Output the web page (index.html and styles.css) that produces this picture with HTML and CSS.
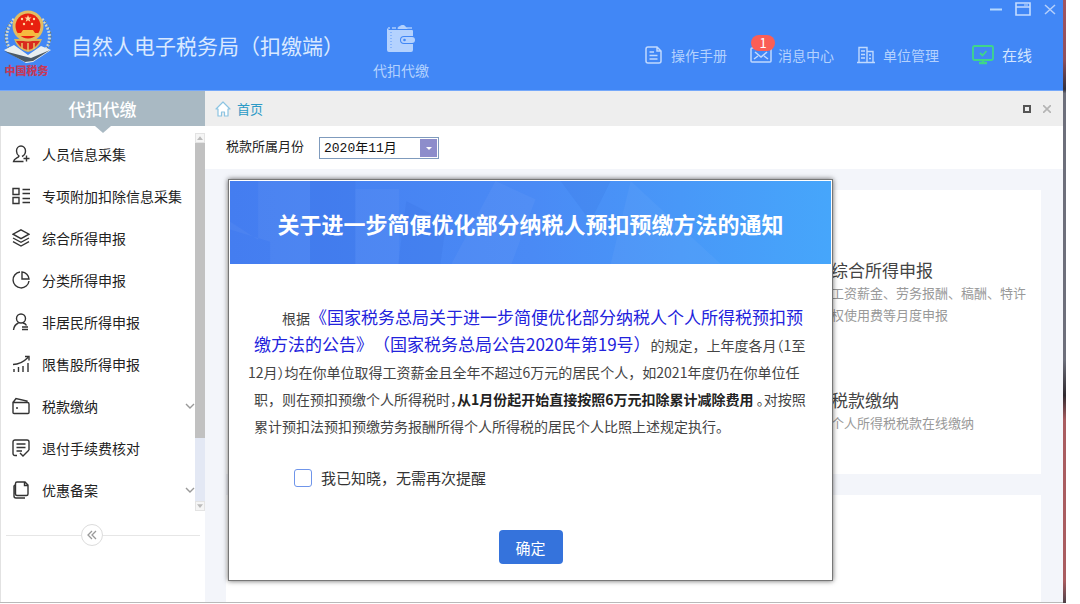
FILE: index.html
```html
<!DOCTYPE html>
<html lang="zh-CN">
<head>
<meta charset="utf-8">
<title>自然人电子税务局（扣缴端）</title>
<link rel="stylesheet" href="styles.css">
</head>
<body>
<div class="window">
  <header class="topbar">
    <div class="brand">
      <div class="emblem">
        <svg class="emblem-art" viewBox="0 0 50 54" width="50" height="54" aria-hidden="true">
          <g fill="none" stroke="#cfd8d2" stroke-width="3" stroke-dasharray="2 1.4">
            <path d="M12 10C3 20 2 33 10 43"/><path d="M40 10c9 10 10 23 2 33"/>
          </g>
          <g fill="none" stroke="#6f7d6b" stroke-width="1" stroke-dasharray="2 2">
            <path d="M9 12C1 22 1 33 9 42"/><path d="M43 12c8 10 8 21 0 30"/>
          </g>
          <path d="M2 41l10-5 14 10 13-9 10 4-18 12-7 1z" fill="#e9eef0"/>
          <path d="M2 42l21 11 8-1 17-11-19 8z" fill="#4c5a66"/>
          <path d="M12 30c3 8 7 11 14 13 7-2 11-5 14-13z" fill="#d9b45c"/>
          <path d="M14 32c4 6 7 8 12 9 5-1 8-3 12-9z" fill="#d92b1e"/>
          <path d="M20 34v6M26 34v8M32 34v6" stroke="#e8c66a" stroke-width="1.5"/>
          <circle cx="26" cy="17" r="15.500" fill="#e2bd62"/>
          <circle cx="26" cy="17" r="12.500" fill="#e8200f"/>
          <path d="M26 6l1 2.500h2.500l-2 1.600.8 2.600-2.300-1.500-2.300 1.500.8-2.600-2-1.600H25z" fill="#ffd9a0"/>
          <g fill="#ffd9a0"><circle cx="20" cy="10" r="1.200"/><circle cx="32" cy="10" r="1.200"/><circle cx="22" cy="15" r="1.200"/><circle cx="30" cy="15" r="1.200"/></g>
          <path d="M19 24l2-3h10l2 3h3v3H16v-3z" fill="#f6b93f"/>
        </svg>
        <span class="emblem-name">中国税务</span>
      </div>
      <h1 class="brand-title">自然人电子税务局（扣缴端）</h1>
    </div>
    <a class="module" href="#module">
      <svg viewBox="0 0 30 28" width="30" height="28" aria-hidden="true">
        <path d="M2 3h2M6 3h4M12 3l5-3 3 3h6" stroke="#a9cbfd" stroke-width="1.500" fill="none"/>
        <path d="M1 3l2 2h23a1 1 0 0 1 1 1v5h-9a4 4 0 0 0 0 8h9v6a2 2 0 0 1-2 2H3a2 2 0 0 1-2-2z" fill="#b4d2fe"/>
        <path d="M11 4l6-4 5 4z" fill="#b4d2fe"/>
        <path d="M5 7v18" stroke="#5b96f8" stroke-dasharray="1 2"/>
        <rect x="15" y="12" width="14" height="6" rx="3" fill="#b4d2fe"/>
        <circle cx="18.500" cy="15" r="1.300" fill="#4187f6"/>
      </svg>
      <span>代扣代缴</span>
    </a>
    <div class="topbar-side">
      <div class="window-buttons">
        <button type="button" aria-label="最小化"><svg viewBox="0 0 12 14" width="12" height="14"><path d="M0 7.500h12" stroke="#b6d8ff" stroke-width="2"/></svg></button>
        <button type="button" aria-label="最大化"><svg viewBox="0 0 16 14" width="16" height="14"><path d="M1 1h14v12H1zM1 5h14" fill="none" stroke="#c3dcff" stroke-width="1.600"/><path d="M9 3h4" stroke="#c3dcff"/></svg></button>
        <button type="button" aria-label="关闭窗口"><svg viewBox="0 0 12 14" width="12" height="14"><path d="M1 3l10 9M11 3L1 12" stroke="#b6d0fb" stroke-width="1.500"/></svg></button>
      </div>
      <nav class="tools">
        <a class="tool" href="#manual">
          <svg viewBox="0 0 18 18" width="18" height="18" fill="none" stroke="#c0d9fe" stroke-width="1.500"><path d="M3 1h9l4 4v10a2 2 0 0 1-2 2H3a2 2 0 0 1-2-2V3a2 2 0 0 1 2-2zM12 1v4h4M4.500 6H9M4.500 9.500h8M4.500 13h8"/></svg>
          <span>操作手册</span>
        </a>
        <a class="tool tool-mail" href="#messages">
          <svg viewBox="0 0 22 18" width="22" height="18" fill="none" stroke="#c0d9fe" stroke-width="1.500"><rect x="1" y="2" width="20" height="14" rx="1"/><path d="M5 6l6 5 6-5M4 13l4-3M18 13l-4-3"/></svg>
          <b class="badge">1</b>
          <span>消息中心</span>
        </a>
        <a class="tool" href="#unit">
          <svg viewBox="0 0 18 18" width="18" height="18" fill="none" stroke="#c0d9fe" stroke-width="1.400"><path d="M2 16.500V1.500h8v15M10 5.500h6v11M0 16.500h18M4 5h4M4 8.500h4M4 12h4M12 9h2M12 12.500h2"/></svg>
          <span>单位管理</span>
        </a>
        <a class="tool tool-online" href="#status">
          <svg viewBox="0 0 22 20" width="22" height="20" fill="none" stroke="#3fd68a" stroke-width="1.800"><rect x="1" y="1" width="20" height="14" rx="1.500"/><path d="M8 8l2.500 2.500L14.500 6"/><path d="M7 18h8M11 15v4" stroke-width="2.500"/></svg>
          <span>在线</span>
        </a>
      </nav>
    </div>
  </header>

  <div class="body">
    <aside class="sidebar">
      <h2 class="sidebar-title">代扣代缴</h2>
      <div class="menu-wrap">
        <ul class="menu">
          <li><a href="#m1"><svg viewBox="0 0 18 18"><path d="M10 11.500c2-1 3.500-2.800 3.500-5.500C13.500 3 11.500 1 9 1S4.500 3 4.500 6c0 2.500 1 4 2.500 5-.5 2-5 2-5.500 5.500h10M14.500 10.500v6M11.500 13.500h6"/></svg><span>人员信息采集</span></a></li>
          <li><a href="#m2"><svg viewBox="0 0 18 18"><path d="M1 1.500h6v6H1zM1 10.500h6v6H1zM10.500 2.500H18M10.500 6.500H18M10.500 11.500H18M10.500 15.500H18"/></svg><span>专项附加扣除信息采集</span></a></li>
          <li><a href="#m3"><svg viewBox="0 0 18 18"><path d="M9 .8l8 4.400-8 4.400-8-4.400zM1 9l8 4.300L17 9M1 12.700L9 17l8-4.300"/></svg><span>综合所得申报</span></a></li>
          <li><a href="#m4"><svg viewBox="0 0 18 18"><path d="M8 1a8 8 0 1 0 9 9M10 1v7h7a7.500 7.500 0 0 0-7-7z"/></svg><span>分类所得申报</span></a></li>
          <li><a href="#m5"><svg viewBox="0 0 18 18"><circle cx="9" cy="5.500" r="4.500"/><path d="M1.500 17c.5-4.500 2.500-6 5-7M11 10c2 .5 3 1.500 3.500 2.500M10 14h6M10 16.500h6"/></svg><span>非居民所得申报</span></a></li>
          <li><a href="#m6"><svg viewBox="0 0 18 18"><path d="M2 17v-3M6.500 17v-5M11 17v-6M16 17V8M1 9.500c6 0 10-2 15-7M13 1.500h4v4"/></svg><span>限售股所得申报</span></a></li>
          <li><a href="#m7"><svg viewBox="0 0 18 18"><path d="M1 5.500h14.500A1.500 1.500 0 0 1 17 7v8.500a1 1 0 0 1-1 1H2a1 1 0 0 1-1-1zM1 5.500l3-4 11 2.500v1.500M4 11h2"/></svg><span>税款缴纳</span><svg class="chevron" viewBox="0 0 10 6"><path d="M1 1l4 4 4-4"/></svg></a></li>
          <li><a href="#m8"><svg viewBox="0 0 18 18"><path d="M5 16.500H3a2 2 0 0 1-2-2V3a2 2 0 0 1 2-2h12a2 2 0 0 1 2 2v8M4.500 5h9M4.500 8.500h9M4.500 12H10M8 14l3 3 6-6"/></svg><span>退付手续费核对</span></a></li>
          <li><a href="#m9"><svg viewBox="0 0 18 18"><path d="M5 1h8l3 3v9a1.500 1.500 0 0 1-1.500 1.500H5A1.500 1.500 0 0 1 3.500 13V2.500A1.500 1.500 0 0 1 5 1zM3.500 3.500L2 5v10a2 2 0 0 0 2 2h9M12.500 1v3.500H16"/></svg><span>优惠备案</span><svg class="chevron" viewBox="0 0 10 6"><path d="M1 1l4 4 4-4"/></svg></a></li>
        </ul>
        <div class="scrollbar" aria-hidden="true">
          <span class="scroll-end"><svg viewBox="0 0 8 5"><path d="M0 5l4-5 4 5z"/></svg></span>
          <span class="scroll-thumb"></span>
          <span class="scroll-track"></span>
          <span class="scroll-end"><svg viewBox="0 0 8 5"><path d="M0 0l4 5 4-5z"/></svg></span>
        </div>
      </div>
      <div class="collapse">
        <button type="button" aria-label="收起菜单"><svg viewBox="0 0 10 10" width="10" height="10"><path d="M5 1L1 5l4 4M9 1L5 5l4 4" fill="none" stroke="#999" stroke-width="1.300"/></svg></button>
      </div>
    </aside>

    <main class="workspace">
      <div class="tabs">
        <a class="tab" href="#home">
          <svg viewBox="0 0 16 16" width="16" height="16"><path d="M1 8l7-7 7 7h-2v7H9.500v-4h-3v4H3V8z" fill="#fff" stroke="#8cc4e2" stroke-width="1.200" stroke-linejoin="round"/></svg>
          <span>首页</span>
        </a>
        <div class="tab-buttons">
          <button type="button" aria-label="还原"><svg viewBox="0 0 8 8" width="8" height="8"><path d="M1 1h6v6H1z" fill="none" stroke="#555" stroke-width="2"/></svg></button>
          <button type="button" aria-label="关闭"><svg viewBox="0 0 8 8" width="8" height="8"><path d="M0 0l8 8M8 0L0 8" stroke="#b4b4b4" stroke-width="1.600"/></svg></button>
        </div>
      </div>
      <div class="filter">
        <label for="period">税款所属月份</label>
        <div class="select-box">
          <select id="period"><option>2020年11月</option></select>
          <span class="select-arrow"><svg viewBox="0 0 6 3" width="6" height="3"><path d="M0 0h6L3 3z" fill="#fff"/></svg></span>
        </div>
      </div>
      <div class="content">
        <section class="card card-features">
          <article class="feature">
            <h3>综合所得申报</h3>
            <p>工资薪金、劳务报酬、稿酬、特许权使用费等月度申报</p>
          </article>
          <article class="feature">
            <h3>税款缴纳</h3>
            <p>个人所得税税款在线缴纳</p>
          </article>
        </section>
        <section class="card card-rest"></section>
      </div>

      <div class="dialog" role="dialog" aria-labelledby="dialog-title">
        <div class="dialog-head">
          <svg class="dialog-pattern" viewBox="0 0 600 82" preserveAspectRatio="none" aria-hidden="true">
            <g fill="#fff" opacity=".04"><path d="M28 0h52v82H40V60L0 48V40l28 18zM125 8h44v74h-44zM265 0l40 18-24 64h-60zM400 0l90 82H380z"/></g>
            <g fill="#1f4fc0" opacity=".08"><path d="M80 0h45v82H80zM176 20l40 20-6 42h-42zM330 0h50l-20 40z"/></g>
          </svg>
          <h2 id="dialog-title">关于进一步简便优化部分纳税人预扣预缴方法的通知</h2>
        </div>
        <div class="dialog-body">
          <div class="notice">
            <p class="line line-first">根据<a href="#notice">《国家税务总局关于进一步简便优化部分纳税人个人所得税预扣预</a></p>
            <p class="line"><a href="#notice">缴方法的公告》（国家税务总局公告2020年第19号）</a>的规定，上年度各月<span class="half">（</span>1至</p>
            <p class="line line-out">12月<span class="half">）</span>均在你单位取得工资薪金且全年不超过6万元的居民个人，如2021年度仍在你单位任</p>
            <p class="line">职，则在预扣预缴个人所得税时<span class="half">，</span><strong>从1月份起开始直接按照6万元扣除累计减除费用</strong> <span class="half">。</span>对按照</p>
            <p class="line">累计预扣法预扣预缴劳务报酬所得个人所得税的居民个人比照上述规定执行。</p>
          </div>
          <label class="ack"><input type="checkbox"><span>我已知晓，无需再次提醒</span></label>
          <button type="button" class="confirm">确定</button>
        </div>
      </div>
    </main>
  </div>
</div>
</body>
</html>
```
FILE: styles.css
```css
* {
  box-sizing: border-box;
  margin: 0;
  padding: 0;
}

body {
  font-family: "Noto Sans CJK SC", sans-serif;
  font-size: 14px;
  color: #333;
  background: #fff;
}

a {
  color: inherit;
  text-decoration: none;
}

button {
  border: 0;
  background: none;
  font: inherit;
  cursor: pointer;
}

svg {
  display: block;
  flex: none;
}

.window {
  display: flex;
  flex-direction: column;
  min-height: calc(100vh - 1px);
  margin: 0 14px 1px 0;
  border-right: 3px solid;
  border-image: linear-gradient(#a05560 0, #8f505c 60px, #33303c 90px, #6d6f7b 94px, #6d6f7b 360px, #2f2a30 395px, #a95c60 420px, #a95c60 580px, #4b4148 100%) 1;
}

/* Top bar */
.topbar {
  display: flex;
  height: 91px;
  background: #4187f6;
  border-bottom: 1px solid #75a8fa;
  color: #c9dffe;
}

.brand {
  display: flex;
  gap: 18px;
}

.emblem {
  display: flex;
  flex-direction: column;
  align-items: center;
  width: 53px;
  padding-top: 9px;
}

.emblem-name {
  color: #c43a5a;
  font-size: 11px;
  font-weight: 900;
  line-height: 15px;
}

.brand-title {
  padding-top: 31px;
  font-size: 21px;
  font-weight: 400;
  line-height: 28px;
  color: #d9e9ff;
}

.module {
  display: flex;
  flex-direction: column;
  align-items: center;
  gap: 7px;
  margin-left: 29px;
  padding-top: 25px;
  color: #b4d2fe;
  line-height: 20px;
}

.topbar-side {
  display: flex;
  flex-direction: column;
  gap: 28px;
  margin-left: auto;
}

.window-buttons {
  display: flex;
  justify-content: flex-end;
  gap: 13px;
  padding: 2px 7px 0 0;
}

.tools {
  display: flex;
  align-items: center;
  gap: 23px;
  padding-right: 31px;
  line-height: 22px;
}

.tool {
  display: flex;
  align-items: center;
  gap: 8px;
  color: #b4d2fe;
}

.tool-mail {
  position: relative;
  gap: 6px;
}

.badge {
  position: absolute;
  left: 1px;
  top: -9px;
  width: 24px;
  border-radius: 8px;
  background: #fa5e56;
  color: #fff;
  font-size: 13px;
  font-weight: 400;
  line-height: 16px;
  text-align: center;
}

.tool-online {
  margin-left: 10px;
  color: #d3e5ff;
  font-size: 15px;
}

/* Sidebar */
.body {
  display: flex;
  flex: 1;
  border-bottom: 1px solid #b9b9b9;
}

.sidebar {
  flex: none;
  width: 205px;
  border-left: 1px solid #e2e2e2;
}

.sidebar-title {
  position: relative;
  margin: 0 0 7px -1px;
  background: #a9b9c3;
  color: #fff;
  font-size: 17px;
  font-weight: 500;
  line-height: 35px;
  text-align: center;
}

.sidebar-title::after {
  content: "";
  position: absolute;
  left: 50%;
  top: 100%;
  margin-left: -8px;
  border: 8px solid transparent;
  border-top: 7px solid #a9b9c3;
  border-bottom: 0;
}

.menu-wrap {
  display: flex;
}

.menu {
  flex: 1;
  list-style: none;
}

.menu a {
  display: flex;
  align-items: center;
  gap: 12px;
  height: 42px;
  padding-left: 11px;
  color: #222;
}

.menu svg {
  width: 18px;
  height: 18px;
  fill: none;
  stroke: #333;
  stroke-width: 1.4;
}

.menu .chevron {
  width: 10px;
  height: 6px;
  margin-left: auto;
  stroke: #999;
}

.scrollbar {
  display: flex;
  flex-direction: column;
  width: 10px;
  background: #e3e8f4;
}

.scroll-end {
  display: flex;
  align-items: center;
  justify-content: center;
  height: 10px;
  border: 1px solid #e3e3e3;
  background: #f5f5f5;
}

.scroll-end svg {
  width: 6px;
  height: 4px;
  fill: #bbb;
}

.scroll-thumb {
  flex: 297;
  background: #c1c1c1;
}

.scroll-track {
  flex: 64;
}

.collapse {
  display: flex;
  align-items: center;
  margin: 13px 5px 0;
}

.collapse::before,
.collapse::after {
  content: "";
  flex: 75;
  height: 1px;
  background: #e6e6e6;
}

.collapse::after {
  flex: 98;
}

.collapse button {
  display: grid;
  place-items: center;
  width: 22px;
  height: 22px;
  border: 1px solid #dcdcdc;
  border-radius: 50%;
}

/* Workspace */
.workspace {
  position: relative;
  display: flex;
  flex: 1;
  flex-direction: column;
  min-width: 0;
}

.tabs {
  display: flex;
  align-items: center;
  justify-content: space-between;
  height: 35px;
  padding: 0 12px 0 10px;
  background: #eee;
}

.tab {
  display: flex;
  align-items: center;
  gap: 6px;
  color: #2b9ac6;
  font-size: 13px;
}

.tab-buttons {
  display: flex;
  gap: 12px;
}

.filter {
  display: flex;
  gap: 15px;
  height: 43px;
  padding: 11px 0 0 21px;
  font-size: 13px;
  line-height: 18px;
  color: #222;
}

.select-box {
  position: relative;
  align-self: flex-start;
}

.select-box select {
  display: block;
  appearance: none;
  width: 120px;
  height: 22px;
  padding: 1px 0 0 4px;
  border: 1px solid #7f9bbd;
  border-radius: 0;
  background: #fff;
  color: #111;
  font: 13px/20px "Liberation Mono", "Noto Sans CJK SC", monospace;
}

.select-arrow {
  position: absolute;
  top: 2px;
  right: 2px;
  bottom: 2px;
  display: grid;
  place-items: center;
  width: 17px;
  background: #8d8dcb;
  pointer-events: none;
}

.content {
  display: flex;
  flex: 1;
  flex-direction: column;
  gap: 21px;
  padding: 21px 22px 0 21px;
  background: #f3f5fa;
}

.card {
  background: #fff;
}

.card-features {
  display: grid;
  grid-template-columns: 1fr 210px;
  row-gap: 61px;
  padding: 67px 0 40px;
}

.card-rest {
  flex: 1;
}

.feature {
  grid-column: 2;
  padding-right: 12px;
}

.feature h3 {
  color: #444;
  font-size: 17px;
  font-weight: 400;
  line-height: 25px;
}

.feature p {
  color: #999;
  font-size: 13px;
  line-height: 22px;
}

/* Notice dialog */
.dialog {
  position: absolute;
  left: 23px;
  top: 88px;
  width: 605px;
  border: 1px solid #777;
  background: #fff;
  box-shadow: 0 0 5px rgba(0, 0, 0, .6);
}

.dialog-head {
  position: relative;
  display: grid;
  place-items: center;
  height: 83px;
  margin: 1px;
  background: linear-gradient(90deg, #447df0, #4a8af5 50%, #46a6fb);
}

.dialog-pattern {
  position: absolute;
  width: 100%;
  height: 100%;
}

.dialog-head h2 {
  position: relative;
  color: #fff;
  font-size: 22px;
  font-weight: 700;
  line-height: 32px;
}

.dialog-body {
  display: flex;
  flex-direction: column;
  align-items: center;
  padding: 40px 0 16px;
}

.notice {
  width: 100%;
  padding-left: 25px;
  color: #444;
  text-spacing-trim: space-all;
}

.line {
  line-height: 27px;
  white-space: nowrap;
}

.line a {
  color: #2222dc;
  font-size: 17px;
  line-height: 20px;
}

.line-first {
  padding-left: 28px;
}

.line-out {
  margin-left: -6px;
}

.line strong {
  color: #222;
}

.half {
  font-feature-settings: "halt";
}

.ack {
  display: flex;
  align-items: center;
  align-self: flex-start;
  gap: 9px;
  margin: 26px 0 40px 65px;
  font-size: 15px;
  line-height: 24px;
}

.ack input {
  appearance: none;
  width: 18px;
  height: 18px;
  border: 1px solid #6f95ea;
  border-radius: 3px;
  background: #fff;
}

.confirm {
  width: 64px;
  height: 34px;
  border-radius: 4px;
  background: #3573dc;
  color: #fff;
  font-size: 15px;
}
```
